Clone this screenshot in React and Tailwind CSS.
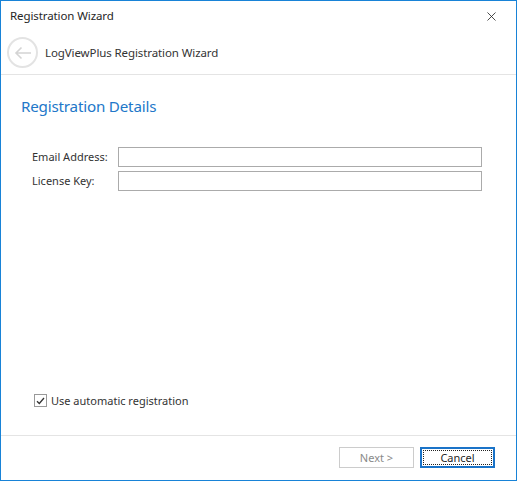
import { X } from "lucide-react";

const font = { fontFamily: '"Noto Sans", "Open Sans", sans-serif' };

function BackButton() {
  return (
    <div className="w-[31px] h-[31px] rounded-full border-2 border-[#e3e3e3] flex items-center justify-center">
      <svg width="18" height="14" viewBox="0 0 18 14" fill="none">
        <path d="M17 7H2M7.5 1.5L2 7l5.5 5.5" stroke="#d4d4d4" strokeWidth="1.6" />
      </svg>
    </div>
  );
}

function Field({ label }) {
  return (
    <div className="flex items-center h-[20px]">
      <span className="w-[86px] text-[11px] text-[#333]">{label}</span>
      <div className="w-[364px] h-[20px] border border-[#ababab] bg-white" />
    </div>
  );
}

export default function App() {
  return (
    <div
      className="w-[517px] h-[481px] bg-white border border-[#1883d7] flex flex-col text-[#262626]"
      style={font}
    >
      {/* title bar */}
      <div className="h-[30px] flex items-center justify-between pl-[9px] pr-[17px]">
        <span className="text-[11.5px] tracking-[-0.1px]">Registration Wizard</span>
        <X size={15} strokeWidth={1.3} color="#222" />
      </div>

      {/* header */}
      <div className="h-[44px] flex items-center pl-[6px] border-b border-[#e4e4e4]">
        <BackButton />
        <span className="ml-[7px] text-[11.5px] tracking-[-0.1px] text-[#333]">
          LogViewPlus Registration Wizard
        </span>
      </div>

      {/* content */}
      <div className="flex-1 flex flex-col pl-[20px]">
        <h1 className="mt-[20px] text-[15.2px] text-[#2277c9] tracking-[-0.2px] leading-[22px]">
          Registration Details
        </h1>
        <div className="mt-[30px] pl-[11px] flex flex-col gap-[4px]">
          <Field label="Email Address:" />
          <Field label="License Key:" />
        </div>
        <div className="flex-1" />
        <label className="mb-[26px] ml-[13px] flex items-center gap-[4px] text-[11px] text-[#333]">
          <span className="w-[13px] h-[13px] border border-[#999] flex items-center justify-center">
            <svg width="9" height="8" viewBox="0 0 9 8" fill="none">
              <path d="M1 4.2l2.3 2.3L8 1" stroke="#333" strokeWidth="1.3" />
            </svg>
          </span>
          Use automatic registration
        </label>
      </div>

      {/* footer */}
      <div className="h-[45px] border-t border-[#e4e4e4] flex items-start justify-end gap-[6px] pt-[11px] pr-[21px]">
        <button
          disabled
          className="w-[75px] h-[21px] border border-[#cccccc] bg-white text-[11px] text-[#8a8a8a] leading-none"
        >
          Next &gt;
        </button>
        <button className="w-[75px] h-[21px] border-2 border-[#1a73c8] bg-white text-[11px] text-[#262626] leading-none p-[1px]">
          <span className="w-full h-full flex items-center justify-center border border-dotted border-[#222]">
            Cancel
          </span>
        </button>
      </div>
    </div>
  );
}
